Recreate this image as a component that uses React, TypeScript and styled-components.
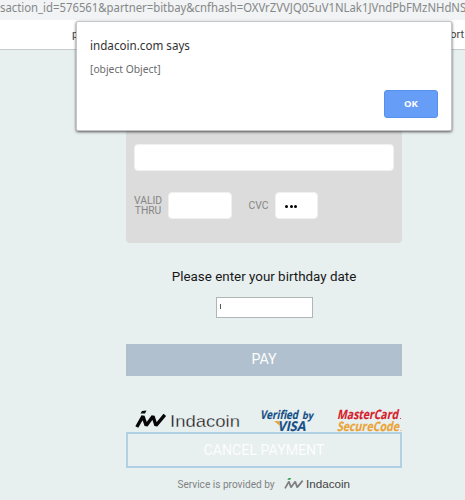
import React from "react";
import styled, { createGlobalStyle } from "styled-components";

const GlobalStyle = createGlobalStyle`
  * { box-sizing: border-box; }
  body { margin: 0; overflow: hidden; background: #e8efef; }
`;

const Page = styled.div`
  position: relative;
  width: 465px;
  height: 500px;
  overflow: hidden;
  background: #e8efef;
  font-family: Roboto, sans-serif;
`;

const AddressBar = styled.div`
  height: 20px;
  background: #f1f3f4;
  color: #858889;
  font: 13px/15px "Noto Sans", sans-serif;
  white-space: nowrap;
`;

const Condensed = styled.span<{ $scale: number }>`
  display: inline-block;
  transform: scaleX(${({ $scale }) => $scale});
  transform-origin: left;
`;

const SiteHeader = styled.header`
  display: flex;
  justify-content: space-between;
  height: 30px;
  padding: 0 1px 0 72px;
  border-bottom: 1px solid #c9cccd;
  background: #fff;
  color: #444;
  font-size: 11px;
  line-height: 30px;
`;

const Dialog = styled.section`
  position: absolute;
  top: 21px;
  left: 76px;
  display: flex;
  flex-direction: column;
  width: 376px;
  height: 110px;
  padding: 15px 13px 12px;
  border: 1px solid #c4c6c7;
  border-radius: 2px;
  background: #fff;
  box-shadow: 0 1px 3px rgba(0, 0, 0, 0.65);
  font-family: "Noto Sans", sans-serif;
`;

const DialogTitle = styled.h1`
  margin: 0;
  color: #333;
  font-size: 13px;
  font-weight: 400;
  line-height: 16px;
`;

const DialogMessage = styled.p`
  margin: 9px 0 0;
  color: #6b6b6b;
  font-size: 10.5px;
  line-height: 14px;
`;

const OkButton = styled.button`
  width: 54px;
  height: 28px;
  margin: auto 0 0 auto;
  padding: 0 0 1px;
  border: 1px solid #5590ea;
  border-radius: 3px;
  background: #669df6;
  color: #fff;
  font: 700 9.5px "Open Sans", sans-serif;
`;

const Checkout = styled.main`
  display: flex;
  flex-direction: column;
  align-items: center;
  width: 276px;
  margin-left: 126px;
`;

const Card = styled.div`
  width: 100%;
  height: 193px;
  padding: 94px 8px 0;
  border-radius: 0 0 4px 4px;
  background: #dcdcdc;
`;

const Field = styled.div<{ $width: number; $gap?: number }>`
  display: flex;
  align-items: center;
  gap: 1.5px;
  width: ${({ $width }) => $width}px;
  height: 27px;
  margin-left: ${({ $gap = 0 }) => $gap}px;
  padding: 1px 0 0 9px;
  border: 1px solid #f0f0f0;
  border-radius: 4px;
  background: #fff;
`;

const CardRow = styled.div`
  display: flex;
  align-items: center;
  margin-top: 21px;
`;

const FieldLabel = styled.label<{ $width: number; $gap?: number }>`
  display: flex;
  flex-direction: column;
  align-items: center;
  width: ${({ $width }) => $width}px;
  margin-left: ${({ $gap = 0 }) => $gap}px;
  color: #858585;
  font-size: 10.3px;
  line-height: 10px;
`;

const Dot = styled.i`
  width: 3px;
  height: 3px;
  border-radius: 50%;
  background: #000;
`;

const Prompt = styled.p`
  margin: 25px 0 0;
  color: #171717;
  font-size: 13.4px;
  line-height: 17px;
  white-space: nowrap;
`;

const DateField = styled.div`
  display: flex;
  align-items: center;
  width: 97px;
  height: 21px;
  margin-top: 12px;
  padding-left: 3px;
  border: 1px solid #b0b6b5;
  background: #fff;
`;

const Caret = styled.span`
  width: 1px;
  height: 5px;
  margin-top: -2px;
  background: #555;
`;

const ActionButton = styled.button<{ $outlined?: boolean }>`
  width: 100%;
  height: ${({ $outlined }) => ($outlined ? 36 : 32)}px;
  margin-top: ${({ $outlined }) => ($outlined ? 0 : 26)}px;
  padding: 0 0 ${({ $outlined }) => ($outlined ? 0 : 2)}px;
  border: ${({ $outlined }) => ($outlined ? "2px solid #b1d0e6" : "0")};
  background: ${({ $outlined }) => ($outlined ? "transparent" : "#b1c0ce")};
  color: #fcfdfd;
  font: 14.2px Roboto, sans-serif;
`;

const LogoStrip = styled.div`
  display: flex;
  align-items: flex-end;
  width: 100%;
  height: 56px;
`;

const Provider = styled.footer`
  display: flex;
  align-items: center;
  gap: 8px;
  height: 32px;
  color: #7f8383;
  font-size: 10.1px;
  white-space: nowrap;
`;

const Logo = styled.svg`
  display: block;
  flex: none;
  overflow: visible;
`;

function IndacoinLogo({ small = false }: { small?: boolean }) {
  const tone = small ? "#808080" : "#070707";
  return (
    <Logo width={small ? 68 : 107} height={small ? 14.5 : 23} viewBox="0 0 107 23">
      <path d="M2.8 18 9 7.2 12.2 16.5 19 7.2 22 16.5 30.8 5.8" fill="none" stroke={tone} strokeWidth={small ? 2.8 : 3.4} strokeLinejoin="bevel" />
      <path d="m8 2 4.5-.4-1.5 2.8H6.5z" fill={small ? "#239a43" : tone} />
      <text x="36" y="18" textLength="70" lengthAdjust="spacingAndGlyphs" fill={small ? "#444" : "#171717"} fontFamily="Liberation Sans" fontSize="17" stroke="#e8efef" strokeWidth={small ? 0 : 0.3}>Indacoin</text>
    </Logo>
  );
}

interface SlantedTextProps {
  x: number;
  y: number;
  width: number;
  size: number;
  color: string;
  children: string;
}

function SlantedText({ x, y, width, size, color, children }: SlantedTextProps) {
  return (
    <text
      transform={`translate(${x} ${y}) skewX(-12)`}
      textLength={width}
      lengthAdjust="spacingAndGlyphs"
      fontFamily="Open Sans"
      fontWeight="700"
      fontSize={size}
      fill={color}
      stroke={color}
      strokeWidth="0.15"
    >
      {children}
    </text>
  );
}

function PaymentLogos() {
  return (
    <LogoStrip>
      <Logo width="276" height="26" viewBox="0 0 276 26">
        <g transform="translate(8 3)"><IndacoinLogo /></g>
        <SlantedText x={134} y={12.5} width={38} size={12} color="#164f88">Verified</SlantedText>
        <SlantedText x={176} y={12.5} width={11} size={10} color="#164f88">by</SlantedText>
        <SlantedText x={151.5} y={25} width={28} size={13.5} color="#164f88">VISA</SlantedText>
        <path d="m148 15 5 .2 1.5 5z" fill="#e6a335" />
        <SlantedText x={211} y={13} width={61} size={13} color="#d51e2c">MasterCard</SlantedText>
        <SlantedText x={211} y={25} width={62} size={13} color="#eba336">SecureCode</SlantedText>
        <circle cx="274.5" cy="12.5" r=".6" fill="#d51e2c" />
        <circle cx="275" cy="24.5" r=".6" fill="#eba336" />
      </Logo>
    </LogoStrip>
  );
}

export default function App() {
  return (
    <>
      <GlobalStyle />
      <Page>
        <AddressBar>
          <Condensed $scale={0.871}>saction_id=576561&amp;partner=bitbay&amp;cnfhash=OXVrZVVJQ05uV1NLak1JVndPbFMzNHdNS</Condensed>
        </AddressBar>
        <SiteHeader><span>p</span><span>ort</span></SiteHeader>
        <Checkout>
          <Card>
            <Field $width={260} />
            <CardRow>
              <FieldLabel $width={28}><span>VALID</span><span>THRU</span></FieldLabel>
              <Field $width={64} $gap={6} />
              <FieldLabel $width={21} $gap={16}>CVC</FieldLabel>
              <Field $width={43} $gap={6}><Dot /><Dot /><Dot /></Field>
            </CardRow>
          </Card>
          <Prompt>Please enter your birthday date</Prompt>
          <DateField><Caret /></DateField>
          <ActionButton>PAY</ActionButton>
          <PaymentLogos />
          <ActionButton $outlined>CANCEL PAYMENT</ActionButton>
          <Provider><span>Service is provided by</span><IndacoinLogo small /></Provider>
        </Checkout>
        <Dialog>
          <DialogTitle><Condensed $scale={0.895}>indacoin.com says</Condensed></DialogTitle>
          <DialogMessage><Condensed $scale={0.98}>[object Object]</Condensed></DialogMessage>
          <OkButton>OK</OkButton>
        </Dialog>
      </Page>
    </>
  );
}
